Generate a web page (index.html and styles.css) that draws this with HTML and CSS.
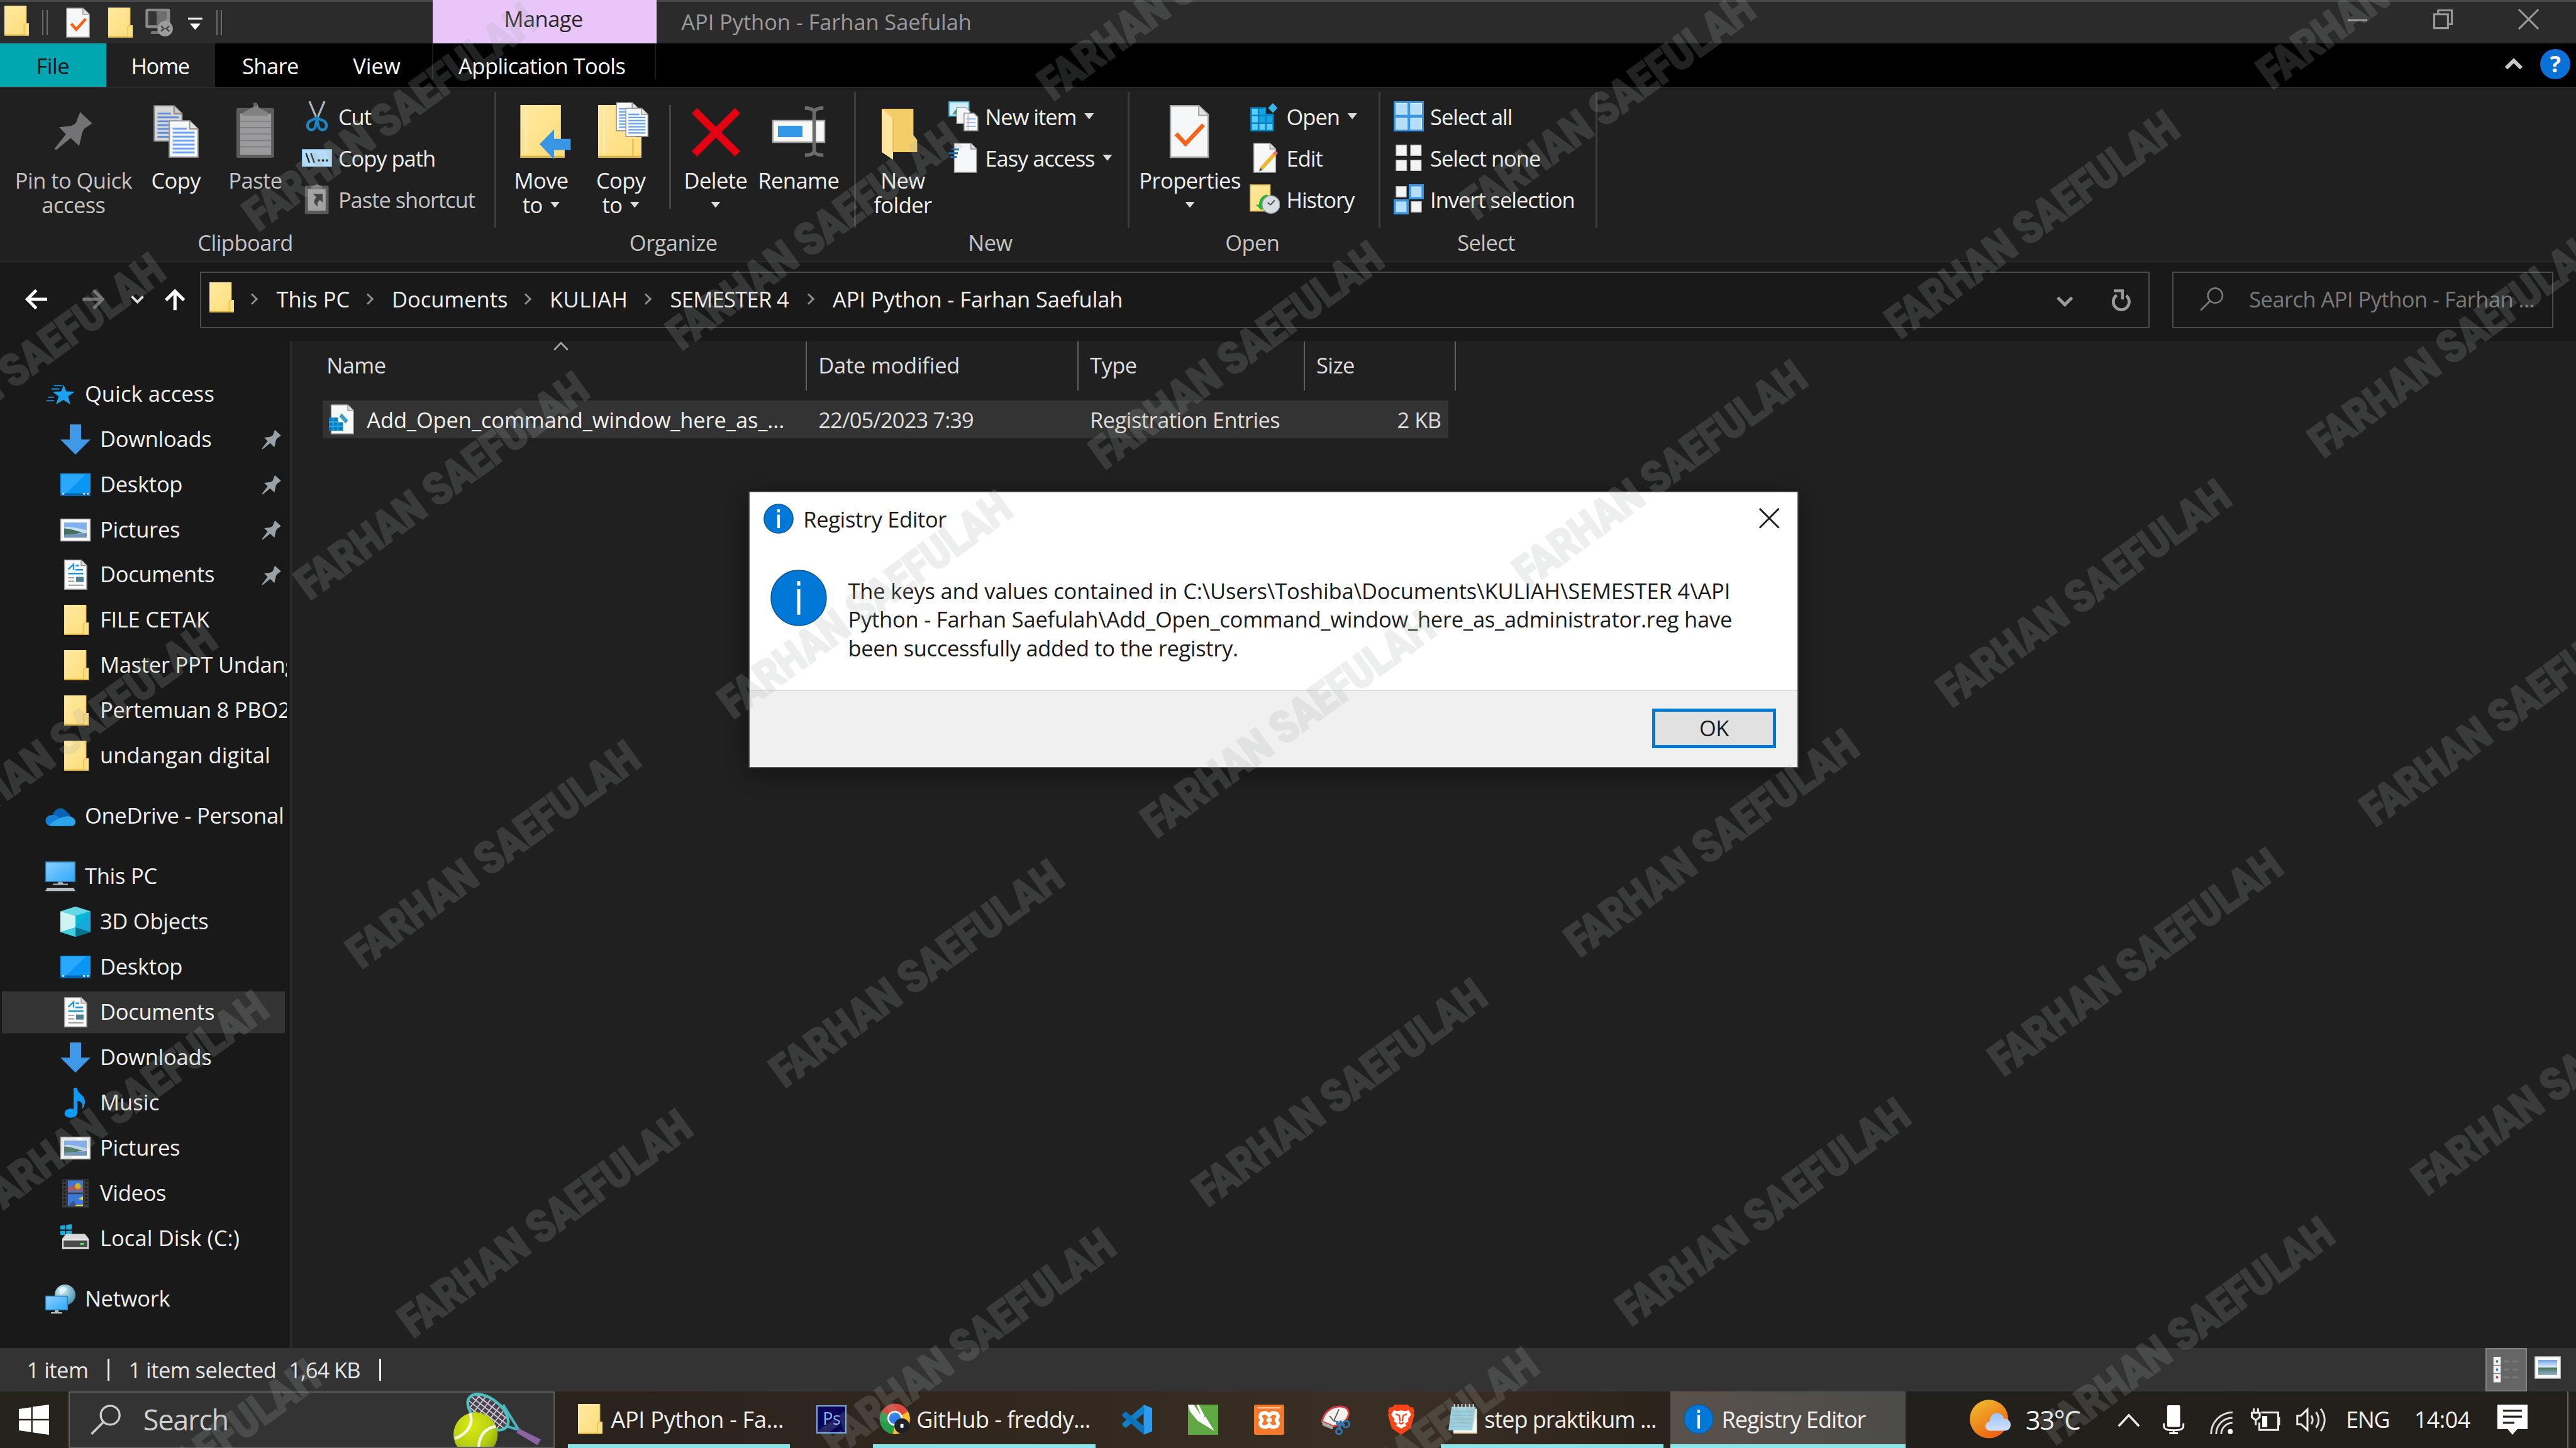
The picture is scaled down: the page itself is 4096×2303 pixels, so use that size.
FILE: index.html
```html
<!DOCTYPE html>
<html lang="en">
<head>
<meta charset="utf-8">
<title>API Python - Farhan Saefulah</title>
<link rel="stylesheet" href="styles.css">
</head>
<body>
<svg class="defs" aria-hidden="true">
  <defs>
    <linearGradient id="gFolder" x1="0" y1="0" x2="1" y2="1"><stop offset="0" stop-color="#ffe9a2"/><stop offset="1" stop-color="#ffdc78"/></linearGradient>
    <linearGradient id="gBlue" x1="0" y1="0" x2="1" y2="1"><stop offset="0" stop-color="#8bd0ff"/><stop offset="1" stop-color="#2fa8f8"/></linearGradient>
    <linearGradient id="gSky" x1="0" y1="0" x2="0" y2="1"><stop offset="0" stop-color="#6ea5f2"/><stop offset=".45" stop-color="#d9e8f7"/><stop offset=".55" stop-color="#4d7a5e"/><stop offset="1" stop-color="#8fb2d0"/></linearGradient>
    <linearGradient id="gSun" x1="0" y1="0" x2=".6" y2="1"><stop offset="0" stop-color="#efc22f"/><stop offset="1" stop-color="#ee6212"/></linearGradient>
    <linearGradient id="gCloud" x1="0" y1="0" x2="0" y2="1"><stop offset="0" stop-color="#9dc1f5"/><stop offset="1" stop-color="#d2e1fb"/></linearGradient>
    <radialGradient id="gBall" cx=".4" cy=".3" r=".8"><stop offset="0" stop-color="#dcea12"/><stop offset=".6" stop-color="#b6cf12"/><stop offset="1" stop-color="#7f9a10"/></radialGradient>
    <radialGradient id="gGlobe" cx=".35" cy=".3" r=".8"><stop offset="0" stop-color="#d8f2f8"/><stop offset="1" stop-color="#3c87ab"/></radialGradient>
  </defs>
  <symbol id="folder" viewBox="0 0 16 16"><path d="M2 0h11.700v9.400H15V16H2z" fill="url(#gFolder)"/><path d="M2 15.300h13v.7H2z" fill="#d9b03c"/><path d="M12.600 15.400v-5l1-1h1.400v6z" fill="#fcdf80"/><path d="M12.400 15.500v-5.200l1.200-1.100V0" fill="none" stroke="#e0b94a" stroke-width=".4"/></symbol>
  <symbol id="checkdoc" viewBox="0 0 16 16"><path d="M2 .3h8.600L14 3.600V15.700H2z" fill="#f6f7f9" stroke="#a9a9a9" stroke-width=".5"/><path d="M10.600.3v3.300H14" fill="#ddd" stroke="#999" stroke-width=".5"/><path d="M4.400 8.600l2.700 3 5-5.600" fill="none" stroke="#f7621b" stroke-width="1.500"/></symbol>
  <symbol id="undo-pc" viewBox="0 0 16 16"><rect x=".8" y=".6" width="13" height="10.400" rx="1" fill="#8a8a8a"/><path d="M2.200 2h4.500v7.400H2.200z" fill="#343434"/><path d="M6.700 2h5.300v4L8 9.400H6.700z" fill="#6d6d6d"/><path d="M4 12.400h6V14H3.400z" fill="#777"/><circle cx="11.200" cy="11.200" r="4.100" fill="#9c9c9c"/><path d="M9 9.800l1.600 1.400L9 12.600M13.400 9.800l-1.600 1.400 1.600 1.400" fill="none" stroke="#444" stroke-width=".8"/></symbol>
  <symbol id="pin" viewBox="0 0 20 20"><path d="M13.400.4L19.600 6.200 15.500 9l-1 1.900-1.600 7-4.300-4.100L1 20l-.8-.7 5.900-7.500L2.600 8.200l6.200-.7 2.300-1.300z" fill="currentColor"/></symbol>
  <symbol id="page" viewBox="0 0 16 20"><path d="M.4.400h10.800l4.400 4.300v14.900H.4z" fill="#f7f8fa" stroke="#9b9b9b" stroke-width=".7"/><path d="M11.200.4v4.300h4.400" fill="#e3e3e3" stroke="#9b9b9b" stroke-width=".7"/><path d="M2.200 4.600h7.400M2.200 6.700h11.600M2.200 8.800h11.600M2.200 10.900h11.600M2.200 13h11.600M2.200 15.100h11.600M2.200 17.200h11.600" stroke="#6ba2f5" stroke-width="1"/></symbol>
  <symbol id="copy" viewBox="0 0 32 32"><use href="#page" x="4" y="2" width="15.600" height="19.600" opacity=".85"/><use href="#page" x="12" y="10" width="16" height="20"/></symbol>
  <symbol id="paste" viewBox="0 0 32 32"><rect x="6" y="3.600" width="20" height="26.400" rx="1" fill="#5c5c5c"/><path d="M8 6.600h16.400v21.800H8z" fill="#9b9b9d"/><path d="M8 10.600h16.400M8 14h16.400M8 17.400h16.400M8 20.800h16.400M8 24.200h16.400" stroke="#7f7f81" stroke-width=".6"/><path d="M9.500 7.700V6l4-2.200L15 3a1.200 1.600 0 0 1 2.600 0l1 .8 4 2.200v1.700z" fill="#828282"/><path d="M16 .8v2" stroke="#666" stroke-width="2"/></symbol>
  <symbol id="cut" viewBox="0 0 16 16"><path d="M4 0l4 9.500M12 0L8 9.500" stroke="#a9b4be" stroke-width="1.100" fill="none"/><path d="M8 8.600C7 10 3.200 9.600 3 12.700c-.2 3 3.600 3.300 4.200.6.300-1.400.6-2.300.8-3.700.2 1.400.5 2.300.8 3.700.6 2.700 4.400 2.400 4.200-.6C12.800 9.600 9 10 8 8.600z" fill="none" stroke="#1d84c4" stroke-width="1.500"/></symbol>
  <symbol id="copypath" viewBox="0 0 16 16"><rect x=".2" y="3.600" width="15.600" height="9" fill="#b5dcf9" stroke="#8ec3ea" stroke-width=".4"/><path d="M2.200 5.600L4 10.600M4.800 5.600l1.800 5" stroke="#222" stroke-width=".8"/><path d="M8.400 9.400h1.200M10.600 9.400h1.200M12.800 9.400h1" stroke="#222" stroke-width="1.100"/></symbol>
  <symbol id="shortcut" viewBox="0 0 16 16"><rect x="1.600" y=".8" width="12.600" height="15" rx=".5" fill="#595959"/><path d="M3.200 2.600h9.400v11.400H3.200z" fill="#a2a2a4"/><path d="M5 2.500V1.200l3-1.200 3 1.200v1.300z" fill="#777"/><path d="M6 5.200h5v4.400L9.600 8.400c-1.500 1-1.600 2-1.100 3.600C5.900 10.200 6.200 8.400 7.700 6.900z" fill="#444"/></symbol>
  <symbol id="moveto" viewBox="0 0 32 32"><path d="M4.800 2h21.500v18h2v10H4.800z" fill="url(#gFolder)"/><path d="M7.800 3v25" stroke="#fff0bd" stroke-width=".7"/><path d="M4.800 29.400h23.500" stroke="#d9b03c" stroke-width="1"/><path d="M15 22.800l7.700-7.900v5H31.500v6h-8.800v5z" fill="#3a96e4"/></symbol>
  <symbol id="copyto" viewBox="0 0 32 32"><path d="M4 2h20v17h3v11H4z" fill="url(#gFolder)"/><path d="M7 3v25" stroke="#fff0bd" stroke-width=".7"/><path d="M4 29.400h23" stroke="#d9b03c" stroke-width="1"/><path d="M22.500 29v-9" stroke="#e0b94a" stroke-width=".7"/><use href="#page" x="13.400" y="0" width="12.400" height="16.400"/><use href="#page" x="18.400" y="3" width="12.400" height="16.400"/></symbol>
  <symbol id="delete" viewBox="0 0 32 32"><path d="M4.700 5L27.600 27.900M27.600 5L4.700 27.900" stroke="#e50011" stroke-width="4" fill="none"/></symbol>
  <symbol id="rename" viewBox="0 0 32 32"><rect x="2.300" y="10.300" width="27.400" height="11.400" fill="#f8f8f8" stroke="#a6a6a6" stroke-width=".8"/><rect x="5" y="13" width="13" height="6" fill="#3497e8"/><path d="M19.300 3.600c2.400 0 4.400.6 4.900 1.900.5-1.300 2.300-1.900 4.900-1.900M19.300 28.600c2.400 0 4.400-.6 4.900-1.900.5 1.300 2.300 1.900 4.900 1.900M24.200 5v22.500" fill="none" stroke="#6b6b6b" stroke-width="1.900"/></symbol>
  <symbol id="newfolder" viewBox="0 0 32 32"><path d="M5 4h16.800v14l2 2.500V27H5z" fill="#f3cd68"/><path d="M5 4l6 5v22l-6-4z" fill="#ffe6a0"/><path d="M11 27V9" stroke="#e2b853" stroke-width=".5"/></symbol>
  <symbol id="newitem" viewBox="0 0 16 16"><rect x=".3" y=".3" width="10.600" height="7.600" fill="#cdeefb" stroke="#3a9cc6" stroke-width=".6"/><path d="M2 7l3-4 4 4z" fill="#54937d"/><path d="M4.400 3.400h5l2 2v6.400h-7z" fill="#f4f4f4" stroke="#999" stroke-width=".4"/><path d="M8.300 6.300h5.200l2.100 2.100v7.300H8.300z" fill="#f7f7f7" stroke="#999" stroke-width=".5"/><path d="M9.500 9.400h5M9.500 11.400h5M9.500 13.400h5" stroke="#8bb8f0" stroke-width=".6"/><path d="M10.400 7v8.400" stroke="#e88" stroke-width=".4"/></symbol>
  <symbol id="easy" viewBox="0 0 16 16"><path d="M3.200.300h8.700l3 3v12.400H3.200z" fill="#f6f7f9" stroke="#a5a5a5" stroke-width=".5"/><path d="M11.900.3v3h3" fill="#ddd" stroke="#999" stroke-width=".5"/><path d="M1.600 3.600h4M0 5.600h5M1 7.600h3.400" stroke="#1a68ac" stroke-width="1"/></symbol>
  <symbol id="regopen" viewBox="0 0 16 16"><path d="M.4 3.200h8.300v3.400h4.100V16H.4z" fill="#0784c4"/><path d="M1.300 4h3v3.200h-3zM1.300 8h3v3.200h-3zM1.300 12h3v3.200h-3zM5.200 12h3v3.200h-3zM9.100 12h3v3.200h-3z" fill="#5ccdfb"/><path d="M5.200 4h3v3.200h-3zM5.200 8h3v3.200h-3zM9.100 8h3v3.200h-3z" fill="#16a4e2"/><path d="M12.300 1l2.500 2.600-2.500 2.600-2.500-2.600z" fill="#35b5ef"/></symbol>
  <symbol id="edit" viewBox="0 0 16 16"><path d="M2.200.300h8.600l3 3v12.400H2.200z" fill="#f7f7f7" stroke="#a5a5a5" stroke-width=".5"/><path d="M10.800.3v3h3" fill="#ddd" stroke="#999" stroke-width=".5"/><path d="M6.300 13.700L13.400 5.800" stroke="#efb52d" stroke-width="2"/><path d="M13 6.300l1.300-1.500" stroke="#e8707c" stroke-width="2"/><path d="M5 15.200l.6-2 1.400 1.200z" fill="#555"/></symbol>
  <symbol id="history" viewBox="0 0 16 16"><path d="M.3.300h10.600v14H.3z" fill="url(#gFolder)" stroke="#d9b03c" stroke-width=".5"/><path d="M9 5.400C6 6.400 5 8.500 5 10.800H3.200l3 3 2.600-3H7.400c0-2 .8-3.300 3-4.200z" fill="#26b52f"/><circle cx="11.300" cy="10.800" r="4.700" fill="#d9dee2" stroke="#8e979d" stroke-width=".5"/><path d="M11 11l2.300-2.500M11 11L9.600 9.700" stroke="#555" stroke-width=".7"/></symbol>
  <symbol id="selall" viewBox="0 0 16 16"><rect width="16" height="16" fill="#3a96e4"/><path d="M1.300 1.200h5.800v5.800H1.300zM9 1.200h5.800v5.800H9zM1.300 9h5.800v5.800H1.300zM9 9h5.800v5.800H9z" fill="#b5defc" stroke="#d5edff" stroke-width=".4"/></symbol>
  <symbol id="selnone" viewBox="0 0 16 16"><path d="M1.300 1.200h5.600v5.600H1.300zM9 1.200h5.600v5.600H9zM1.300 9.200h5.600v5.600H1.300zM9 9.200h5.600v5.600H9z" fill="#f4f4f4" stroke="#bbb" stroke-width=".4"/></symbol>
  <symbol id="selinv" viewBox="0 0 16 16"><path d="M8 0h8v8H8zM0 8h8v8H0z" fill="#3a96e4"/><path d="M1.300 1.200h5.400v5.600H1.300zM9.300 9.200h5.400v5.600H9.300z" fill="#f4f4f4" stroke="#bbb" stroke-width=".4"/><path d="M9.200 1.200h5.600v5.600H9.200zM1.200 9.200h5.600v5.600H1.200z" fill="#b5defc"/></symbol>
  <symbol id="star" viewBox="0 0 16 16"><path d="M9.800 3l1.300 3.500 4.500.2-3.500 2.500 1.200 4.200-3.700-2.400-3.900 2.400 1.400-4.200-3.300-2.500 4.600-.2z" fill="#1ba1f2"/><path d="M4.600 3.400h4.600M3.400 5.200h4M.6 11.400h4M1.600 9.600h3" stroke="#1b86cc" stroke-width=".7"/></symbol>
  <symbol id="down" viewBox="0 0 16 16"><path d="M5 0h6v8h5l-8 8-8-8h5z" fill="#3f98e8"/></symbol>
  <symbol id="desk" viewBox="0 0 16 16"><rect y="2" width="16" height="12" fill="#0a96f5"/><path d="M.5 2.500h13L3 12.600H.5z" fill="#2aa8ff"/><path d="M0 12.500h16V14H0z" fill="#0668b0"/><path d="M.9 12.800h1.200M12 12.800h1.100M14 12.800h1.100" stroke="#fff" stroke-width=".8"/></symbol>
  <symbol id="pics" viewBox="0 0 16 16"><rect x=".2" y="2.200" width="15.600" height="11.600" fill="#fafafa" stroke="#bbb" stroke-width=".5"/><path d="M2 4h12v8H2z" fill="#7fb0f4"/><path d="M2 6.500c3-1 8 1 12 1.500V12H2z" fill="#c8dff4"/><path d="M2 7.200c3 0 7 1.500 10 2.200L2 11z" fill="#44705d"/><path d="M2 10.400l12-.8V12H2z" fill="#6f95b8"/></symbol>
  <symbol id="docs" viewBox="0 0 16 16"><path d="M2.200.2h8.800l3 3v12.600H2.200z" fill="#fafafa" stroke="#9b9b9b" stroke-width=".5"/><path d="M11 .2v3h3" fill="#ddd" stroke="#999" stroke-width=".5"/><path d="M4.200 5.200L7 2.500v3M8 3.200h2M8 5.400h4M4.200 7.400h8" stroke="#1d94e2" stroke-width=".8" fill="none"/><path d="M4.200 9.600h3.200M4.200 11.500h3.200M4.200 13.600h8" stroke="#9a9a9a" stroke-width=".6"/><path d="M8.300 9.200h4v2.700h-4z" fill="#4f8291"/></symbol>
  <symbol id="onedrive" viewBox="0 0 16 16"><path d="M4 7.500C4.600 4.200 8.500 2.300 11 5.300c.8 1 1.800 1.200 2.500 3L9 11H3z" fill="#0a62b8"/><path d="M3.500 13.300C-.5 13.300-1 8.500 2.600 7.600c2-.7 3.800.2 5 1.500L10 13.300z" fill="#1380d8"/><path d="M2 12.900c2-2.400 6-4.300 8.400-4.600 2.500-.6 5.500.4 5.600 2.700 0 1.600-1 2.300-2.500 2.300h-10z" fill="#2ba4ea"/></symbol>
  <symbol id="pc" viewBox="0 0 16 16"><rect x=".2" y=".3" width="15.600" height="10.400" fill="url(#gBlue)" stroke="#2c7fb8" stroke-width=".5"/><path d="M7 10.800h2l.6 1H12v.7H4v-.7h2.400z" fill="#a8b4bc"/><path d="M1 14h14l1 1.800H0z" fill="#b4bfc7"/></symbol>
  <symbol id="cube" viewBox="0 0 16 16"><path d="M0 2.500L8 0l8 2.500v11L8 16 0 13.500z" fill="#17a9dc"/><path d="M0 2.500l8 2.300V11L0 13.400z" fill="#d2f3f4"/><path d="M0 2.500L8 0l8 2.500-8 2.300z" fill="#66d8e6"/><path d="M8 11v5L0 13.400z" fill="#3fcfdd"/><path d="M8 11l8 2.400L8 16z" fill="#02708f"/><path d="M8 4.800v6.200l8-8.500z" fill="#08b9d4"/></symbol>
  <symbol id="music" viewBox="0 0 16 16"><path d="M7 0h1.800c.4 3.700 4.400 3.500 4.200 7.700-.1 1.700-.7 3-1.600 3.800.8-3-.1-4.200-2.400-4.700V13c0 3.800-6.600 3.700-6.800.8-.1-2.300 2.800-3.200 4.800-2.500z" fill="#0c9cf6"/></symbol>
  <symbol id="video" viewBox="0 0 16 16"><path d="M1 .5h14v15H1z" fill="#3a3a3a"/><path d="M2.200 1v14M13.800 1v14" stroke="#171717" stroke-width="1" stroke-dasharray="1 1"/><path d="M4 1.200h8v6.400H4zM4 8.400h8v6.400H4z" fill="#3c78d8"/><path d="M4 5.200l3-1.700 5 2v1.300H4z" fill="#a95a66"/><circle cx="9.300" cy="4.200" r="1.600" fill="#c8b52a"/><path d="M4 14.800l3-3 2 3z" fill="#35538c"/><path d="M9.500 11l2.500-1.500v2zM8 14h4v.8H8z" fill="#e8cf3a"/></symbol>
  <symbol id="disk" viewBox="0 0 16 16"><path d="M0 1.200l2.500-.4v2.400H0zM3.100.7L6 .3v2.900H3.100zM0 3.900h2.500v2.300L0 5.900zM3.100 3.900H6v2.800l-2.900-.4z" fill="#0fb1e4"/><path d="M3 5.500h10l2 2.500H1z" fill="#d7d8da"/><path d="M1 8h14v5.500H1z" fill="#e8e8e8"/><path d="M1.700 9h12.600v3.500H1.700z" fill="#4a4b4c"/><path d="M10.500 10.800h2" stroke="#4dff5e" stroke-width=".9"/></symbol>
  <symbol id="net" viewBox="0 0 16 16"><circle cx="10.500" cy="5.800" r="5.500" fill="url(#gGlobe)"/><path d="M7 2.500c2-1.500 4-1 4.500.2S9 4.500 8.400 6z" fill="#e9fafd" opacity=".7"/><rect x=".2" y="6.500" width="11.600" height="7.300" fill="url(#gBlue)" stroke="#2c7fb8" stroke-width=".5"/><path d="M5 14h2v1h2v.8H3V15h2z" fill="#b5bfc6"/></symbol>
  <symbol id="reg" viewBox="0 0 16 16"><path d="M2.200.300h8.800l3 3v12.400H2.200z" fill="#f7f8fa" stroke="#a5a5a5" stroke-width=".5"/><path d="M11 .3v3h3" fill="#ddd" stroke="#999" stroke-width=".5"/><path d="M1 7h4.800v2.500h2.700V14H1z" fill="#0a7fc0"/><path d="M3.200 7v7M5.800 9v5M1 9.300h5M1 11.700h7.400" stroke="#37b2ec" stroke-width=".5"/><path d="M7.800 4.800l3.400 3.800-1.400 1.600-3.300-3.700z" fill="#3d9dca"/></symbol>
  <symbol id="info" viewBox="0 0 32 32"><circle cx="16" cy="16" r="15.600" fill="#0078d7" stroke="#0a5c9c" stroke-width=".6"/><path d="M16 6.500v2.600M16 11v14.500" stroke="#fff" stroke-width="1.800"/></symbol>
  <symbol id="info-s" viewBox="0 0 16 16"><circle cx="8" cy="8" r="7.700" fill="#0078d7" stroke="#0a5c9c" stroke-width=".5"/><path d="M8 3v1.700M8 5.800v7.200" stroke="#fff" stroke-width="1.400"/></symbol>
  <symbol id="glass" viewBox="0 0 16 16"><circle cx="10.400" cy="5.600" r="5" fill="none" stroke="currentColor" stroke-width="1.100"/><path d="M6.900 9.200L.5 15.600" stroke="currentColor" stroke-width="1.200"/></symbol>
</svg>

<div class="desktop">
  <header class="titlebar">
    <div class="qat">
      <svg class="i16 qat-app"><use href="#folder"/></svg>
      <i class="grip"></i>
      <svg class="i16 qat-check"><use href="#checkdoc"/></svg>
      <svg class="i16 qat-folder"><use href="#folder"/></svg>
      <svg class="i16 qat-pc"><use href="#undo-pc"/></svg>
      <svg class="qat-more" viewBox="0 0 8 8"><path d="M0 0h7.600v1.100H0z" fill="#eee"/><path d="M1 3.200h5.600L3.800 6.500z" fill="#fff"/></svg>
      <i class="grip"></i>
    </div>
    <div class="manage">Manage</div>
    <div class="window-title">API Python - Farhan Saefulah</div>
    <div class="caption">
      <svg viewBox="0 0 10 10"><path d="M0 5.500h10" stroke="#999" fill="none"/></svg>
      <svg viewBox="0 0 10 10"><path d="M.5 2.500h7v7h-7zM2.500 2.500v-2h7v7h-2" stroke="#999" fill="none"/></svg>
      <svg viewBox="0 0 10 10"><path d="M0 0l10 10M10 0L0 10" stroke="#999" fill="none"/></svg>
    </div>
  </header>

  <nav class="tabs">
    <div class="tab file">File</div>
    <div class="tab home">Home</div>
    <div class="tab share">Share</div>
    <div class="tab view">View</div>
    <div class="tab tools">Application Tools</div>
    <svg class="collapse" viewBox="0 0 10 7"><path d="M1 5.800l4-4 4 4" fill="none" stroke="#c8c8c8" stroke-width="2"/></svg>
    <div class="help">?</div>
  </nav>

  <section class="ribbon">
    <div class="group g-clip">
      <div class="group-body">
        <div class="big b-pin dim"><svg class="pin-big"><use href="#pin"/></svg><span>Pin to Quick</span><span>access</span></div>
        <div class="big b-copy"><svg class="i32"><use href="#copy"/></svg><span>Copy</span></div>
        <div class="big b-paste dim"><svg class="i32"><use href="#paste"/></svg><span>Paste</span></div>
        <div class="small-col c-clip">
          <div class="small"><svg class="i16"><use href="#cut"/></svg><span>Cut</span></div>
          <div class="small"><svg class="i16"><use href="#copypath"/></svg><span>Copy path</span></div>
          <div class="small dim"><svg class="i16"><use href="#shortcut"/></svg><span>Paste shortcut</span></div>
        </div>
      </div>
      <div class="group-label">Clipboard</div>
    </div>
    <div class="group g-org">
      <div class="group-body">
        <div class="big b-move"><svg class="i32"><use href="#moveto"/></svg><span>Move</span><span>to<i class="arr"></i></span></div>
        <div class="big b-copyto"><svg class="i32"><use href="#copyto"/></svg><span>Copy</span><span>to<i class="arr"></i></span></div>
        <i class="inner-sep"></i>
        <div class="big b-delete"><svg class="i32"><use href="#delete"/></svg><span>Delete</span><span><i class="arr lone"></i></span></div>
        <div class="big b-rename"><svg class="i32"><use href="#rename"/></svg><span>Rename</span></div>
      </div>
      <div class="group-label">Organize</div>
    </div>
    <div class="group g-new">
      <div class="group-body">
        <div class="big b-newf"><svg class="i32"><use href="#newfolder"/></svg><span>New</span><span>folder</span></div>
        <div class="small-col c-new">
          <div class="small"><svg class="i16"><use href="#newitem"/></svg><span>New item</span><i class="arr"></i></div>
          <div class="small"><svg class="i16"><use href="#easy"/></svg><span>Easy access</span><i class="arr"></i></div>
        </div>
      </div>
      <div class="group-label">New</div>
    </div>
    <div class="group g-open">
      <div class="group-body">
        <div class="big b-prop"><svg class="i32" viewBox="0 0 32 32"><path d="M5.700 2.400h15l5 4.600v22.700h-20z" fill="#f6f7f9" stroke="#a5a5a5" stroke-width=".8"/><path d="M20.700 2.400V7.500h5" fill="#e1e1e1" stroke="#a5a5a5" stroke-width=".7"/><path d="M8.700 17.300l5 5.300L23.200 12.500" fill="none" stroke="#f7621b" stroke-width="2.200"/></svg><span>Properties</span><span><i class="arr lone"></i></span></div>
        <div class="small-col c-open">
          <div class="small"><svg class="i16"><use href="#regopen"/></svg><span>Open</span><i class="arr"></i></div>
          <div class="small"><svg class="i16"><use href="#edit"/></svg><span>Edit</span></div>
          <div class="small"><svg class="i16"><use href="#history"/></svg><span>History</span></div>
        </div>
      </div>
      <div class="group-label">Open</div>
    </div>
    <div class="group g-sel">
      <div class="group-body">
        <div class="small-col c-sel">
          <div class="small"><svg class="i16"><use href="#selall"/></svg><span>Select all</span></div>
          <div class="small"><svg class="i16"><use href="#selnone"/></svg><span>Select none</span></div>
          <div class="small"><svg class="i16"><use href="#selinv"/></svg><span>Invert selection</span></div>
        </div>
      </div>
      <div class="group-label">Select</div>
    </div>
  </section>

  <section class="address-row">
    <div class="arrows">
      <svg class="a-back" viewBox="0 0 13 12"><path d="M12.500 6H1.500M6.500 1L1.500 6l5 5" fill="none" stroke="#fff" stroke-width="1.700"/></svg>
      <svg class="a-fwd" viewBox="0 0 13 12"><path d="M.5 6h11M6.500 1l5 5-5 5" fill="none" stroke="#6b6b6b" stroke-width="1.700"/></svg>
      <svg class="a-chev" viewBox="0 0 7 5"><path d="M.5.8l3 3 3-3" fill="none" stroke="#ddd" stroke-width="1.300"/></svg>
      <svg class="a-up" viewBox="0 0 12 12"><path d="M6 12V1.500M1 6.500l5-5 5 5" fill="none" stroke="#fff" stroke-width="1.800"/></svg>
    </div>
    <div class="address">
      <svg class="i16"><use href="#folder"/></svg>
      <i class="crumb-sep"></i><span class="cr1">This PC</span>
      <i class="crumb-sep"></i><span class="cr2">Documents</span>
      <i class="crumb-sep"></i><span class="cr3">KULIAH</span>
      <i class="crumb-sep"></i><span class="cr4">SEMESTER 4</span>
      <i class="crumb-sep"></i><span class="cr5">API Python - Farhan Saefulah</span>
      <div class="address-tools">
        <svg class="drop" viewBox="0 0 10 6"><path d="M1 .8l4 4 4-4" fill="none" stroke="#999" stroke-width="1.800"/></svg>
        <svg class="refresh" viewBox="0 0 10 12"><path d="M7.600 3.400A4.200 4.200 0 1 1 2.600 3.200" fill="none" stroke="#999" stroke-width="1.600"/><path d="M1 .8h4.600v4.600" fill="none" stroke="#999" stroke-width="1.500"/></svg>
      </div>
    </div>
    <div class="search"><svg class="search-glass"><use href="#glass"/></svg><span>Search API Python - Farhan ...</span></div>
  </section>

  <main class="content">
    <aside class="nav">
      <div class="row top"><svg class="i16"><use href="#star"/></svg><span class="loose">Quick access</span></div>
      <div class="row"><svg class="i16"><use href="#down"/></svg><span>Downloads</span><svg class="pin"><use href="#pin"/></svg></div>
      <div class="row"><svg class="i16"><use href="#desk"/></svg><span>Desktop</span><svg class="pin"><use href="#pin"/></svg></div>
      <div class="row"><svg class="i16"><use href="#pics"/></svg><span>Pictures</span><svg class="pin"><use href="#pin"/></svg></div>
      <div class="row"><svg class="i16"><use href="#docs"/></svg><span>Documents</span><svg class="pin"><use href="#pin"/></svg></div>
      <div class="row"><svg class="i16"><use href="#folder"/></svg><span>FILE CETAK</span></div>
      <div class="row"><svg class="i16"><use href="#folder"/></svg><span>Master PPT Undangan</span></div>
      <div class="row"><svg class="i16"><use href="#folder"/></svg><span>Pertemuan 8 PBO2</span></div>
      <div class="row"><svg class="i16"><use href="#folder"/></svg><span class="loose">undangan digital</span></div>
      <div class="row top spaced"><svg class="i16"><use href="#onedrive"/></svg><span>OneDrive - Personal</span></div>
      <div class="row top spaced"><svg class="i16"><use href="#pc"/></svg><span>This PC</span></div>
      <div class="row"><svg class="i16"><use href="#cube"/></svg><span>3D Objects</span></div>
      <div class="row"><svg class="i16"><use href="#desk"/></svg><span>Desktop</span></div>
      <div class="row selected"><svg class="i16"><use href="#docs"/></svg><span>Documents</span></div>
      <div class="row"><svg class="i16"><use href="#down"/></svg><span>Downloads</span></div>
      <div class="row"><svg class="i16"><use href="#music"/></svg><span class="loose">Music</span></div>
      <div class="row"><svg class="i16"><use href="#pics"/></svg><span>Pictures</span></div>
      <div class="row"><svg class="i16"><use href="#video"/></svg><span>Videos</span></div>
      <div class="row"><svg class="i16"><use href="#disk"/></svg><span class="loose">Local Disk (C:)</span></div>
      <div class="row top spaced"><svg class="i16"><use href="#net"/></svg><span>Network</span></div>
    </aside>
    <div class="files">
      <div class="cols">
        <div class="col c-name">Name<svg class="sort" viewBox="0 0 8 5"><path d="M.4 4.500L4 .8l3.600 3.700" fill="none" stroke="#aaa" stroke-width=".9"/></svg></div>
        <div class="col c-date">Date modified</div>
        <div class="col c-type">Type</div>
        <div class="col c-size">Size</div>
      </div>
      <div class="file-row">
        <svg class="i16"><use href="#reg"/></svg>
        <span class="f-name">Add_Open_command_window_here_as_...</span>
        <span class="f-date">22/05/2023 7:39</span>
        <span class="f-type">Registration Entries</span>
        <span class="f-size">2 KB</span>
      </div>
    </div>
  </main>

  <footer class="status">
    <span class="s1">1 item</span><i class="bar"></i><span class="s2">1 item selected</span><span class="s3">1,64 KB</span><i class="bar b2"></i>
    <div class="views">
      <div class="v-details"><svg viewBox="0 0 16 14"><path d="M1 0h4v14H1z" fill="#f4f4f4"/><path d="M2.400 2.500h1.200" stroke="#2f7a57" stroke-width="1.200"/><path d="M2.400 7h1.200" stroke="#3a7ae0" stroke-width="1.200"/><path d="M2.400 11.300h1.200" stroke="#d33" stroke-width="1.200"/><path d="M1 4.700h4M1 9.200h4" stroke="#888" stroke-width=".5"/><path d="M6.500 2.500h3M11.500 2.500h3M6.500 7h3M11.500 7h3M6.500 11.300h3M11.500 11.300h3" stroke="#7a7a7a" stroke-width="1"/></svg></div>
      <svg class="v-large" viewBox="0 0 14 12"><path d="M.3.300h13.400v11.400H.3z" fill="#fff" stroke="#ccc" stroke-width=".5"/><path d="M2 2h10v8H2z" fill="url(#gSky)"/></svg>
    </div>
  </footer>

  <footer class="taskbar">
    <div class="start"><svg class="i16" viewBox="0 0 16 16"><path d="M0 2.300l6.500-.9v6.200H0zM7.300 1.200L16 0v7.600H7.300zM0 8.400h6.500v6.200L0 13.700zM7.300 8.400H16V16l-8.700-1.200z" fill="#fff"/></svg></div>
    <div class="task-search">
      <svg class="i16"><use href="#glass"/></svg><span>Search</span>
      <svg class="tennis" viewBox="0 0 50 28">
        <path d="M29 17.500l7 2M27 6l8 13" stroke="#46b5bd" stroke-width="1.400"/>
        <path d="M35 18.500l12 6-1.800 3-11-6.600z" fill="#8b64a5"/>
        <g transform="rotate(38 19 10)"><ellipse cx="19" cy="10" rx="12.500" ry="7" fill="#46424c"/><path d="M9 6.500h20M7 9h24M7 11.500h24M9 14h20M10 5.500v9M13 4.500v11M16 4v12M19 3.500v13M22 4v12M25 4.500v11M28 5.500v9" stroke="#d3c8d8" stroke-width=".6"/><ellipse cx="19" cy="10" rx="12.500" ry="7" fill="none" stroke="#4cc0bb" stroke-width="1.500"/></g>
        <circle cx="12.400" cy="21.800" r="11.700" fill="url(#gBall)"/><path d="M9.500 10.500c2 6-1.500 11-8 13.500M23 17.500c-5.500 1-9 5-9 12" fill="none" stroke="#f4f8e8" stroke-width="1.500"/>
      </svg>
    </div>
    <div class="task t-api"><svg class="i16"><use href="#folder"/></svg><span>API Python - Fa...</span></div>
    <div class="task-icon t-ps"><div class="ps">Ps</div></div>
    <div class="task t-git"><svg class="i16" viewBox="0 0 16 16"><circle cx="8" cy="8" r="8" fill="#fbc02d"/><path d="M8 8L1 4A8 8 0 0 1 15 4z" fill="#dc4a41"/><path d="M8 8L1 4a8 8 0 0 0 6 12z" fill="#259c4a"/><circle cx="8" cy="7.600" r="4" fill="#fff"/><circle cx="8" cy="7.600" r="3.100" fill="#2f7ff0"/><circle cx="11.700" cy="11.600" r="4" fill="#1d2126"/><path d="M11.700 10.600v2" stroke="#fff" stroke-width="1.600"/></svg><span>GitHub - freddy...</span></div>
    <div class="task-icon t-first"><svg class="i16" viewBox="0 0 16 16"><path d="M11.500 0L16 1.800v12.400L11.500 16z" fill="#2b9cf0"/><path d="M11.800 0v4.500L2 12.300.2 11v-1.100z" fill="#1180cb"/><path d="M11.800 16v-4.500L2 3.700.2 5v1.100z" fill="#0b74be"/></svg></div>
    <div class="task-icon"><svg class="i16" viewBox="0 0 16 16"><path d="M0 0h16v16H0z" fill="#5fa843"/><path d="M0 0h3l3.800 5.700L4.500 0h1.200l3 5.800c-.6 1.200 0 .8.600.5L14 14 5 8.500 1 3.600z" fill="#fff"/></svg></div>
    <div class="task-icon"><svg class="i16" viewBox="0 0 16 16"><rect width="16" height="16" rx="1" fill="#f5792a"/><path d="M1.800 1.700h12.400" stroke="#fbc49e" stroke-width=".7"/><path d="M8 5.800C6.500 3.600 3.100 4.200 3.300 6.300c0 1 .9 1.200.9 1.900s-.9.800-.9 1.700c-.2 2.100 3.200 2.900 4.700.7 1.500 2.200 4.900 1.400 4.700-.7 0-.9-.9-1-.9-1.700s.9-.9.900-1.900C12.900 4.200 9.500 3.600 8 5.800zM6.600 8.200h2.800" fill="none" stroke="#fff" stroke-width="1.900"/></svg></div>
    <div class="task-icon"><svg class="i16" viewBox="0 0 16 16"><path d="M1 9C2 4 6 .7 11 1c4 .3 5 3 3.500 6-1.700 3-5 4-7.500 4.500z" fill="#f4f1f1" stroke="#d93a42" stroke-width="1"/><path d="M1 9l6 2.500-.5 1.700L1.300 11z" fill="#aaa"/><path d="M10 2.500L7.300 8.600l2.500.5M7.300 8.600L5 6" stroke="#555" stroke-width=".6" fill="none"/><path d="M8.500 9.800l4.500 1.200M11 8.500l-1 5" stroke="#2f76b4" stroke-width="1.300"/><circle cx="13.800" cy="10.300" r="1.700" fill="none" stroke="#2f76b4" stroke-width="1"/><circle cx="10" cy="14.200" r="1.500" fill="none" stroke="#2f76b4" stroke-width="1"/></svg></div>
    <div class="task-icon"><svg class="i16" viewBox="0 0 16 16"><path d="M4.500 0h7l1.300 1.500 1.400-.2.800 2-.4 1L15 5.500l-2 7L8 16l-5-3.500-2-7 .4-1.200-.4-1 .8-2 1.400.2z" fill="#fb4417"/><path d="M4 3l2 .4 2-.3 2 .3 2-.4 1.300 2.300-1.700 2.300.3 1.300-2 1.300 1 .9L8 12.700l-2.900-1.600 1-.9-2-1.300.3-1.300L2.700 5.300z" fill="#fff"/><path d="M5 5l2 .8.400 3M11 5l-2 .8-.4 3M6.700 9.500L8 10.200l1.300-.7" fill="none" stroke="#fb4417" stroke-width=".8"/></svg></div>
    <div class="task t-note"><svg class="i16" viewBox="0 0 16 16"><path d="M3 2.500h12.500V16H3z" fill="#f7f5ee"/><path d="M3 15.300h12.500v.7H3z" fill="#a8986a"/><path d="M2 1.500h12.800L13 14H.4z" fill="#9ed2e2"/><path d="M2.500 4h11M2.300 6h11M2 8h11M1.600 10h11M1.300 12h11" stroke="#7ab5c8" stroke-width=".4"/><path d="M3.500 0v2.500M5.500 0v2.500M7.500 0v2.500M9.500 0v2.500M11.500 0v2.500M13.500 0v2.500" stroke="#dfe8ea" stroke-width=".6"/></svg><span>step praktikum ...</span></div>
    <div class="task t-reg"><svg class="i16"><use href="#info-s"/></svg><span>Registry Editor</span></div>
    <div class="tray">
      <svg class="weather" viewBox="0 0 22 21"><circle cx="10.300" cy="10.300" r="10.200" fill="url(#gSun)"/><path d="M11 16.500c-3.300 0-3.400-4.500-.4-4.800.2-6 7-5.800 7.600-1.500 4.700-.3 4.700 6.300.6 6.300z" fill="url(#gCloud)"/></svg>
      <span class="temp">33°C</span>
      <svg class="y-caret" viewBox="0 0 12 8"><path d="M.6 7.400L6 1.600l5.400 5.800" fill="none" stroke="#e8e8e8" stroke-width="1.200"/></svg>
      <svg class="y-mic" viewBox="0 0 12 16"><rect x="2.400" width="7.200" height="12" rx=".8" fill="#fff"/><path d="M.6 10v1.400c0 2.200 2.400 2.400 5.400 2.400s5.400-.2 5.400-2.400V10M6 13.600v2M3.600 15.500h4.800" fill="none" stroke="#fff" stroke-width="1"/></svg>
      <svg class="y-wifi" viewBox="0 0 13 13"><circle cx="11.200" cy="11.400" r="1.400" fill="#fff"/><path d="M.6 12.800A12 12 0 0 1 12.500.8M3.400 12.800a9 9 0 0 1 9-9M6.200 12.800a6.300 6.300 0 0 1 6.200-6.200" fill="none" stroke="#ddd" stroke-width="1"/></svg>
      <svg class="y-bat" viewBox="0 0 16 12"><path d="M5.500 2.200h9v9.200h-10V7.500M15 4.700v4.200" fill="none" stroke="#eee" stroke-width="1"/><path d="M6 4h2.700v6H6z" fill="#fff"/><path d="M1.500 0v2M3.800 0v2M.5 2.300h4.200v2.300L2.600 6.300.5 4.600zM2.600 6v3" fill="none" stroke="#eee" stroke-width="1"/></svg>
      <svg class="y-vol" viewBox="0 0 16 14"><path d="M.6 4.800h2L6 1.500v11L2.600 9.400h-2z" fill="none" stroke="#eee" stroke-width="1"/><path d="M8 4.800c1 1.500 1 3.200 0 4.600M10.500 3c1.900 2.500 1.900 5.600 0 8.200M13 1.200c2.800 3.500 2.800 8.300 0 11.800" fill="none" stroke="#ddd" stroke-width="1"/></svg>
      <span class="eng">ENG</span>
      <span class="clock">14:04</span>
      <svg class="y-note" viewBox="0 0 16 16"><path d="M0 0h16v13h-5.500L8 16l-2.500-3H0z" fill="#fff"/><path d="M3 3.200h10M3 6.400h10M3 9.600h6" stroke="#26231f" stroke-width="1.100"/></svg>
    </div>
  </footer>

  <div class="dialog">
    <div class="dlg-head"><svg class="i16"><use href="#info-s"/></svg><span>Registry Editor</span><svg class="dlg-x" viewBox="0 0 11 11"><path d="M.3.300l10.400 10.400M10.700.3L.3 10.700" stroke="#222" stroke-width="1"/></svg></div>
    <div class="dlg-body">
      <svg class="dlg-info"><use href="#info"/></svg>
      <div class="dlg-text"><p class="p1">The keys and values contained in C:\Users\Toshiba\Documents\KULIAH\SEMESTER 4\API</p><p class="p2">Python - Farhan Saefulah\Add_Open_command_window_here_as_administrator.reg have</p><p class="p3">been successfully added to the registry.</p></div>
    </div>
    <div class="dlg-foot"><div class="ok">OK</div></div>
  </div>

  <svg class="watermark" viewBox="0 0 1366 768" preserveAspectRatio="none">
    <defs>
      <text id="mark" transform="rotate(-36.100)" x="-1" y="-.3" textLength="185" lengthAdjust="spacingAndGlyphs">FARHAN SAEFULAH</text>
      <g id="strip">
        <use href="#mark" x="-137" y="-978"/><use href="#mark" x="-109.600" y="-782.400"/><use href="#mark" x="-82.200" y="-586.800"/><use href="#mark" x="-54.800" y="-391.200"/><use href="#mark" x="-27.400" y="-195.600"/><use href="#mark"/><use href="#mark" x="27.400" y="195.600"/><use href="#mark" x="54.800" y="391.200"/>
      </g>
    </defs>
    <use href="#strip" x="-32" y="451"/><use href="#strip" x="192.600" y="514"/><use href="#strip" x="417.100" y="577.100"/><use href="#strip" x="641.500" y="640.300"/><use href="#strip" x="866" y="703.500"/><use href="#strip" x="1090.800" y="766.600"/><use href="#strip" x="1315.300" y="829.800"/>
  </svg>
</div>
</body>
</html>
```
FILE: styles.css
```css
/* 1rem is ten desktop pixels of a 1366-wide screen */
html { font-size: calc(100vw / 136.6); }
* { box-sizing: border-box; }
body {
  margin: 0;
  width: 100vw;
  height: 100vh;
  overflow: hidden;
  background: #202020;
  color: #f0f0f0;
  font-family: "Open Sans", "Noto Sans", sans-serif;
  font-size: 1.15rem;
  letter-spacing: -0.018rem;
  white-space: nowrap;
}
svg { display: block; flex: none; overflow: visible; }
.defs { position: absolute; width: 0; height: 0; }
p { margin: 0; }
.i16 { width: 1.6rem; height: 1.6rem; }
.i32 { width: 3.2rem; height: 3.2rem; }

.desktop {
  position: relative;
  width: 100%;
  height: 100vh;
  display: flex;
  flex-direction: column;
  overflow: hidden;
}

/* title bar */
.titlebar {
  flex: none;
  height: 2.3rem;
  display: flex;
  background: #2b2b2b;
  box-shadow: inset 0 0.1rem #464646;
}
.qat { width: 22.93rem; display: flex; align-items: center; padding: 0.1rem 0 0 0.05rem; }
.qat-app { margin-top: -0.2rem; }
.grip {
  width: 0.28rem; height: 1.35rem; margin-left: 0.6rem;
  border: solid #6a6a6a; border-width: 0 0.08rem;
}
.qat-check { margin-left: 0.8rem; }
.qat-folder { margin-left: 0.6rem; }
.qat-pc { margin-left: 0.5rem; }
.qat-more { width: 0.8rem; height: 0.8rem; margin-left: 0.75rem; margin-top: 0.3rem; }
.qat-more + .grip { margin-left: 0.7rem; }
.manage {
  width: 11.9rem;
  padding-left: 3.8rem;
  line-height: 2rem;
  background: #e9c6fa;
  color: #2a2a2a;
}
.window-title { padding-left: 1.3rem; line-height: 2.35rem; color: #9a9a9a; letter-spacing: -0.003rem; }
.caption { margin-left: auto; display: flex; padding: 0.5rem 2rem 0 0; gap: 3.5rem; }
.caption svg { width: 1.04rem; height: 1.04rem; }

/* tabs */
.tabs { flex: none; height: 2.3rem; display: flex; background: #000; line-height: 2.4rem; color: #fff; }
.tab { flex: none; }
.file { width: 5.62rem; padding-left: 1.92rem; background: #00a6b0; color: #111; }
.home { width: 5.8rem; padding-left: 1.33rem; background: #202020; letter-spacing: -0.04rem; }
.share { width: 5.8rem; padding-left: 1.42rem; }
.view { width: 5.68rem; padding-left: 1.5rem; letter-spacing: 0; }
.tools { width: 11.9rem; height: 1.9rem; padding-left: 1.35rem; border: solid #1d1d1d; border-width: 0 0.1rem; }
.collapse { width: 1rem; height: 0.7rem; margin: 0.75rem 0.9rem 0 auto; }
.help {
  width: 1.6rem; height: 1.6rem; margin: 0.3rem 0.3rem 0 0;
  border-radius: 50%; background: #0a72d6;
  line-height: 1.6rem; text-align: center; font-weight: 700; font-size: 1.2rem;
}

/* ribbon */
.ribbon {
  flex: none;
  height: 9.3rem;
  display: flex;
  background: #202020;
  border-top: 0.1rem solid #2a2a2a;
  border-bottom: 0.1rem solid #2a2a2a;
}
.group { flex: none; height: 9rem; position: relative; display: flex; flex-direction: column; }
.group::after {
  content: ""; position: absolute; right: 0; top: 0.2rem;
  width: 0.1rem; height: 7.2rem; background: #3d3d3d;
}
.g-clip { width: 26.3rem; }
.g-org { width: 19.1rem; }
.g-new { width: 14.5rem; }
.g-open { width: 13.3rem; }
.g-sel { width: 11.5rem; }
.group-body { height: 7.47rem; display: flex; }
.group-label { text-align: center; line-height: 1.6rem; color: #c4c4c4; padding-right: 0.28rem; }
.dim { color: #c4c4c4; }
.big { flex: none; display: flex; flex-direction: column; align-items: center; padding-top: 0.7rem; }
.big svg { margin-bottom: 0.34rem; }
.big span { display: flex; align-items: center; line-height: 1.3rem; height: 1.3rem; }
.big .pin-big { width: 2.06rem; height: 2.06rem; margin: 0.54rem 0 0.94rem; color: #737375; }
.b-pin { width: 7.8rem; }
.b-copy { width: 3.06rem; }
.b-paste { width: 4.8rem; margin-left: 0.28rem; }
.b-move { width: 3.9rem; margin-left: 0.45rem; }
.b-copyto { width: 4.55rem; }
.inner-sep { width: 0.1rem; height: 5.5rem; margin: 0.9rem 0 0 0.3rem; background: #444; }
.b-delete { width: 4.3rem; margin-left: 0.2rem; }
.b-rename { width: 4.5rem; }
.b-newf { width: 4.6rem; margin-left: 0.17rem; }
.b-prop { width: 5.6rem; margin-left: 0.4rem; }
.small-col { padding-top: 0.42rem; letter-spacing: -0.034rem; }
.c-clip { margin-left: 0.06rem; }
.c-new { margin-left: 0.13rem; }
.c-open { margin-left: 0.38rem; }
.c-sel { margin-left: 0.7rem; }
.small { height: 2.2rem; display: flex; align-items: center; gap: 0.34rem; }
.arr {
  width: 0.52rem; height: 0.33rem; margin-left: 0.4rem;
  background: #dcdcdc; clip-path: polygon(0 0, 100% 0, 50% 100%);
}
.small .arr { margin-left: 0.08rem; margin-top: -0.05rem; }
.arr.lone { margin-left: 0; }

/* address row */
.address-row { flex: none; height: 4.2rem; display: flex; background: #191919; }
.arrows { width: 10.6rem; display: flex; align-items: center; padding: 0 0 0.22rem 1.29rem; }
.a-back, .a-fwd { width: 1.25rem; height: 1.2rem; }
.a-fwd { margin-left: 1.78rem; }
.a-chev { width: 0.7rem; height: 0.5rem; margin-left: 1.38rem; }
.a-up { width: 1.15rem; height: 1.2rem; margin-left: 1.07rem; }
.address {
  width: 103.4rem; height: 3rem; margin-top: 0.5rem;
  border: 0.1rem solid #4a4a4a;
  display: flex; align-items: center;
  padding: 0 0 0.08rem 0.25rem;
  letter-spacing: 0;
}
.address > .i16 { margin-top: -0.15rem; }
.crumb-sep {
  width: 0.42rem; height: 0.42rem; margin-left: 0.8rem;
  border: solid #8c8c8c; border-width: 0.11rem 0.11rem 0 0;
  transform: rotate(45deg) translate(-0.1rem, 0.1rem);
}
.address > span { margin-left: 0.92rem; }
.cr1 { width: 3.98rem; }
.cr2 { width: 6.23rem; }
.cr3 { width: 4.25rem; letter-spacing: 0.02rem; }
.cr4 { width: 6.48rem; letter-spacing: -0.022rem; }
.address .cr5 { letter-spacing: -0.003rem; }
.address-tools {
  margin-left: auto; height: 100%; width: 5.5rem;
  display: flex; align-items: center; gap: 2rem; padding-left: 0.6rem;
}
.drop { width: 0.95rem; height: 0.57rem; margin-top: 0.25rem; }
.refresh { width: 1rem; height: 1.2rem; margin-top: 0.15rem; }
.search {
  width: 20.2rem; height: 3rem; margin: 0.5rem 0 0 1.2rem;
  border: 0.1rem solid #4a4a4a;
  display: flex; align-items: center;
  padding: 0 0 0.08rem 1.4rem; color: #7a7a7a;
}
.search-glass { width: 1.25rem; height: 1.25rem; margin-right: 1.35rem; }

/* content */
.content { flex: none; height: 53.4rem; display: flex; }
.nav {
  width: 15.5rem; padding: 1.6rem 0.15rem 0 0.1rem;
  background: #191919; border-right: 0.15rem solid #2b2b2b;
  display: flex; flex-direction: column;
  letter-spacing: -0.008rem;
}
.row { flex: none; height: 2.4rem; display: flex; align-items: center; gap: 0.5rem; padding-left: 3.1rem; overflow: hidden; }
.row span { margin-top: -0.1rem; }
.row.top { padding-left: 2.3rem; }
.row.spaced { margin-top: 0.8rem; }
.row.selected { margin-right: 0.1rem; background: #333; box-shadow: inset 0 0.08rem #191919, inset 0 -0.08rem #191919; }
.loose { letter-spacing: 0.004rem; }
.row .pin { width: 1.05rem; height: 1.05rem; margin: 0 0.3rem 0 auto; color: #98a1a8; }
.files { flex: 1; background: #202020; }
.cols { display: flex; height: 2.6rem; padding-left: 1.6rem; color: #dedede; }
.col { position: relative; line-height: 2.52rem; border-right: 0.1rem solid #5f5f5f; padding-left: 0.6rem; }
.c-name { width: 25.7rem; padding-left: 0.22rem; }
.c-date { width: 14.4rem; letter-spacing: -0.008rem; }
.c-type { width: 12rem; }
.c-size { width: 8rem; }
.sort { position: absolute; left: 12.25rem; top: 0; width: 0.8rem; height: 0.5rem; }
.file-row {
  width: 59.7rem; height: 2rem; margin: 0.55rem 0 0 1.6rem;
  background: #333; display: flex; align-items: center; padding-left: 0.25rem;
}
.f-name { width: 23.95rem; margin-left: 0.5rem; letter-spacing: -0.003rem; }
.f-date { width: 14.4rem; letter-spacing: -0.03rem; }
.f-type { width: 11rem; }
.f-size { margin-left: auto; margin-right: 0.38rem; }
.f-date, .f-type, .f-size { color: #dedede; }

/* status bar */
.status {
  flex: none; height: 2.3rem; display: flex; align-items: center;
  background: #333; color: #e6e6e6; padding-left: 1.42rem;
}
.s1 { width: 4.28rem; }
.s2 { width: 8.5rem; margin-left: 1.02rem; }
.s3 { width: 4.25rem; letter-spacing: -0.035rem; }
.bar { width: 0.1rem; height: 1.15rem; background: #eee; }
.b2 { margin-left: 0.53rem; }
.views { margin-left: auto; height: 100%; display: flex; align-items: center; padding-right: 0.8rem; gap: 0.4rem; }
.v-details {
  width: 2.2rem; height: 100%; background: #666; border: 0.1rem solid #828282;
  display: flex; align-items: center; justify-content: center;
}
.v-details svg { width: 1.6rem; height: 1.35rem; }
.v-large { width: 1.4rem; height: 1.2rem; margin-top: -0.2rem; }

/* taskbar */
.taskbar {
  flex: 1; display: flex; min-height: 0;
  background: linear-gradient(90deg, #26231d 0, #2a231d 24%, #33281e 40%, #3a2f25 55%, #2c231b 64%, #22201c 74%, #231f1b 100%);
}
.start { width: 3.65rem; display: flex; align-items: center; padding-left: 1rem; }
.task-search {
  width: 25.75rem; background: #333; border: 0.1rem solid #5c5c5c;
  display: flex; align-items: center; padding-left: 1.08rem;
  font-size: 1.5rem; color: #cfcfcf; letter-spacing: -0.04rem;
  overflow: hidden;
}
.task-search span { margin-left: 1.2rem; }
.tennis { width: 5rem; height: 2.8rem; margin: 0 0.35rem 0 auto; }
.task {
  width: 11.8rem; display: flex; align-items: center; gap: 0.35rem;
  padding-left: 0.35rem; border-bottom: 0.22rem solid #8ae6e8;
  padding-top: 0.15rem; font-size: 1.2rem;
}
.t-api { margin-left: 0.7rem; letter-spacing: -0.008rem; }
.t-ps { margin-left: 0.45rem; }
.t-git { margin-left: 0.45rem; }
.t-note { margin-left: 0.37rem; letter-spacing: -0.033rem; }
.t-reg { width: 12.5rem; margin-left: 0.35rem; padding-left: 0.7rem; gap: 0.43rem; letter-spacing: -0.032rem; background: linear-gradient(90deg, #59514b, #4c4c49); }
.task-icon { width: 3.5rem; display: flex; align-items: center; justify-content: center; }
.t-first { margin-left: 0.45rem; }
.ps {
  width: 1.6rem; height: 1.5rem; background: #0b0557; border: 0.1rem solid #77b0ef;
  color: #85b8f2; font-size: 0.9rem; line-height: 1.25rem; text-align: center;
}
.tray { flex: 1; display: flex; align-items: center; padding-left: 3.35rem; border-right: 0.1rem solid #6a6864; margin-right: 0.4rem; font-size: 1.2rem; }
.weather { width: 2.25rem; height: 2.1rem; }
.temp { width: 3.85rem; margin-left: 0.75rem; font-size: 1.4rem; letter-spacing: -0.05rem; }
.y-caret { width: 1.2rem; height: 0.8rem; margin-left: 1.03rem; }
.y-mic { width: 1.15rem; height: 1.6rem; margin-left: 1.2rem; }
.y-wifi { width: 1.25rem; height: 1.25rem; margin: 0.3rem 0 0 1.35rem; }
.y-bat { width: 1.6rem; height: 1.2rem; margin-left: 0.93rem; }
.y-vol { width: 1.6rem; height: 1.4rem; margin-left: 0.8rem; }
.eng { width: 2.2rem; margin-left: 1.03rem; letter-spacing: -0.045rem; }
.clock { width: 2.6rem; margin-left: 1.42rem; }
.y-note { width: 1.6rem; height: 1.6rem; margin-left: 1.8rem; }

/* dialog window */
.dialog {
  position: absolute; left: 39.75rem; top: 26.1rem;
  width: 55.55rem; height: 14.6rem;
  background: #fff; color: #1a1a1a;
  display: flex; flex-direction: column;
  box-shadow: 0 0 0 0.05rem #555, 0 0.3rem 1.2rem rgba(0, 0, 0, 0.45);
}
.dlg-head { height: 2.85rem; display: flex; align-items: center; padding: 0 0.95rem 0 0.75rem; }
.dlg-head span { margin-left: 0.5rem; letter-spacing: -0.012rem; }
.dlg-x { width: 1.08rem; height: 1.08rem; margin: -0.05rem 0 0 auto; }
.dlg-body { flex: 1; display: flex; padding: 1.25rem 0 0 1.1rem; }
.dlg-info { width: 3rem; height: 3rem; }
.dlg-text { margin: 0.38rem 0 0 1.12rem; line-height: 1.513rem; }
.p1 { letter-spacing: -0.005rem; }
.p2 { letter-spacing: -0.007rem; }
.p3 { letter-spacing: -0.011rem; }
.dlg-foot {
  height: 4.1rem; background: #f0f0f0; border-top: 0.1rem solid #dfdfdf;
  display: flex; justify-content: flex-end; padding: 0.92rem 1.12rem 0 0;
}
.ok {
  width: 6.58rem; height: 2.1rem; background: #e1e1e1; border: 0.2rem solid #0078d7;
  text-align: center; line-height: 1.75rem;
}

/* repeated diagonal text over the whole screen */
.watermark {
  position: absolute; inset: 0; width: 100%; height: 100%;
  overflow: hidden; pointer-events: none;
  fill: #a6ada8; stroke: #a6ada8; stroke-width: 0.9px; opacity: 0.2;
  font-family: Roboto, "Liberation Sans", sans-serif; font-weight: 900; font-size: 23.6px;
  letter-spacing: 0;
}
```
